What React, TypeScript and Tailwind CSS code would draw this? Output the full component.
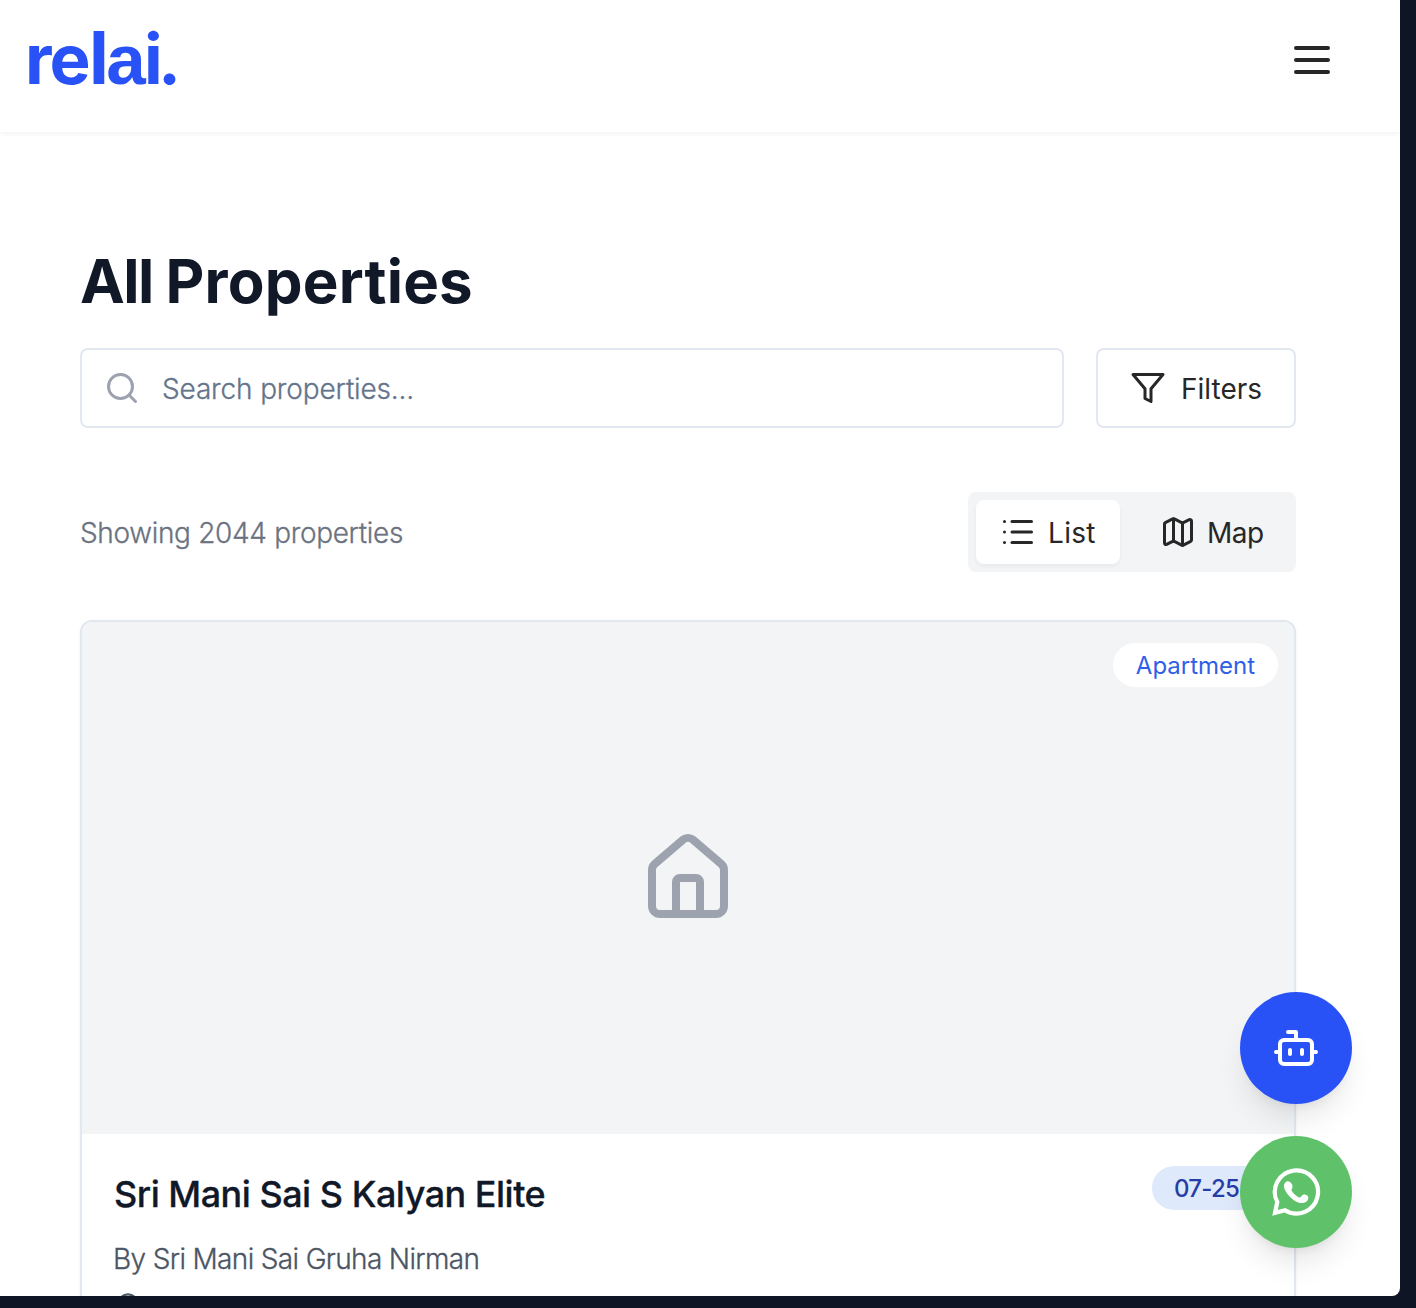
import type { ReactNode, SVGProps } from 'react';
import { Bot, House, List, Map } from 'lucide-react';

function MenuIcon(props: SVGProps<SVGSVGElement>) {
  return (
    <svg viewBox="0 0 24 24" fill="none" stroke="currentColor" strokeWidth="2" strokeLinecap="round" {...props}>
      <path d="M4 6h16M4 12h16M4 18h16" />
    </svg>
  );
}

function SearchIcon(props: SVGProps<SVGSVGElement>) {
  return (
    <svg viewBox="0 0 24 24" fill="none" stroke="currentColor" strokeWidth="2" strokeLinecap="round" {...props}>
      <circle cx="11" cy="11" r="8" />
      <path d="m21 21-4.3-4.3" />
    </svg>
  );
}

function FilterIcon(props: SVGProps<SVGSVGElement>) {
  return (
    <svg viewBox="0 0 24 24" fill="none" stroke="currentColor" strokeWidth="2" strokeLinecap="round" strokeLinejoin="round" {...props}>
      <polygon points="22 3 2 3 10 12.46 10 19 14 21 14 12.46 22 3" />
    </svg>
  );
}

function PinIcon(props: SVGProps<SVGSVGElement>) {
  return (
    <svg viewBox="0 0 24 24" fill="none" stroke="currentColor" strokeWidth="2" {...props}>
      <path d="M20 10c0 6-8 12-8 12s-8-6-8-12a8 8 0 0 1 16 0Z" />
      <circle cx="12" cy="10" r="3" />
    </svg>
  );
}

function WhatsappIcon(props: SVGProps<SVGSVGElement>) {
  return (
    <svg viewBox="0 0 24 24" overflow="visible" {...props}>
      <path
        d="M1.5 22.4 2.65 17A10.8 10.8 0 1 1 6.5 21.15Z"
        fill="none"
        stroke="currentColor"
        strokeWidth="2.1"
        strokeLinejoin="miter"
      />
      <path
        d="M7.8 6.6C6.6 6.8 5.9 7.9 6 9.2C6.2 11 7.4 12.8 8.8 14.3C10.2 15.8 11.9 17 13.5 17.4C15 17.8 16.9 17.4 17.7 16.2C18.2 15.5 18.3 14.7 18 14.2C17.5 13.5 16.6 13.2 15.8 13.3C14.9 13.5 14.7 14.5 14 14.8C12.6 14.6 10.4 12.5 9.7 11.1C9.7 10.5 10.3 10.1 10.3 9.1C10.2 8 9 6.5 7.8 6.6Z"
        fill="currentColor"
      />
    </svg>
  );
}

function FloatingButton({ className, label, children }: { className: string; label: string; children: ReactNode }) {
  return (
    <button
      aria-label={label}
      className={`flex size-28 items-center justify-center rounded-full text-white shadow-[0_20px_30px_-6px_rgba(0,0,0,0.1),0_8px_12px_-8px_rgba(0,0,0,0.1)] ${className}`}
    >
      {children}
    </button>
  );
}

function Header() {
  return (
    <header className="h-[132px] shrink-0 bg-white shadow-[0_2px_4px_rgba(0,0,0,0.05)]">
      <div className="flex w-[1376px] items-start justify-between pr-10 pl-[25px]">
        <span className="pt-[21px] text-[69px] leading-[68px] font-bold tracking-[-1.8px] text-[#2952f6]">
          re<span className="text-[73px] leading-none tracking-[-2.5px]">l</span>
          <span className="font-['Liberation_Sans'] text-[71px] leading-none tracking-[-1.8px]">a</span>
          <span className="tracking-[-4.5px]">i.</span>
        </span>
        <button aria-label="Menu" className="mt-9">
          <MenuIcon className="size-12" />
        </button>
      </div>
    </header>
  );
}

function PropertyCard() {
  return (
    <article className="mt-12 overflow-hidden rounded-t-xl border-2 border-b-0 border-[#e2e8f0] shadow-[0_2px_4px_rgba(0,0,0,0.05)]">
      <div className="relative flex h-[512px] items-center justify-center bg-[#f3f4f6]">
        <House size={96} className="text-[#9ca3af]" />
        <span className="absolute top-[21px] right-4 flex h-11 w-[165px] items-center justify-center rounded-full bg-white pt-0.5 text-2xl text-[#2f5fe6]">
          Apartment
        </span>
      </div>
      <div className="px-8 pt-8">
        <div className="flex items-start justify-between">
          <h2 className="pt-[3px] text-[36px] leading-[50px] font-medium tracking-[-0.5px] text-[#111827] [-webkit-text-stroke:0.3px]">
            Sri Mani Sai S Kalyan Elite
          </h2>
          <span className="mr-[-10px] flex h-11 w-[120px] items-center rounded-full bg-[#dee9fc] pt-0.5 pl-[22px] text-2xl font-medium tracking-[-0.7px] whitespace-nowrap text-[#273da6]">
            07-25
          </span>
        </div>
        <p className="mt-5 -ml-px text-[28px] leading-10 font-light tracking-[-0.65px] text-[#4b5563] [-webkit-text-stroke:0.3px]">
          By Sri Mani Sai Gruha Nirman
        </p>
        <PinIcon className="mt-[13px] size-7 text-[#4b5563]" />
      </div>
    </article>
  );
}

export default function App() {
  return (
    <div className="h-[1308px] w-[1416px] overflow-hidden bg-[#0e1524] font-['Inter',sans-serif] text-[#272727]">
      <div className="relative flex h-[1296px] w-[1400px] flex-col overflow-hidden rounded-br-lg bg-white">
        <Header />
        <main className="w-[1376px] px-20 pt-[113px]">
          <h1 className="text-[60px] leading-[72px] font-bold text-[#111827]">
            <span className="tracking-[-1.5px]">All </span>
            <span className="tracking-[0.2px]">Properties</span>
          </h1>

          <div className="mt-[31px] flex gap-8">
            <label className="flex h-20 flex-1 items-center gap-[22px] rounded-lg border-2 border-[#e2e8f0] pl-[22px]">
              <SearchIcon className="size-9 text-[#9ca3af]" />
              <span className="pt-0.5 text-[28px] font-light tracking-[-0.15px] text-[#64748b] [-webkit-text-stroke:0.3px]">
                Search properties...
              </span>
            </label>
            <button className="flex h-20 w-[200px] items-center gap-[15px] rounded-lg border-2 border-[#e2e8f0] pl-8">
              <FilterIcon className="size-9" />
              <span className="pt-0.5 text-[28px]">Filters</span>
            </button>
          </div>

          <div className="mt-16 flex h-20 items-center justify-between">
            <p className="pt-0.5 text-[28px] font-light tracking-[-0.33px] text-[#6b7280] [-webkit-text-stroke:0.3px]">
              Showing 2044 properties
            </p>
            <div className="flex h-20 gap-4 rounded-lg bg-[#f3f4f6] p-2">
              <button className="flex w-36 items-center gap-3 rounded-lg bg-white pl-6 shadow-[0_2px_4px_rgba(0,0,0,0.05)]">
                <List size={36} />
                <span className="pt-0.5 text-[28px] tracking-[0.3px]">List</span>
              </button>
              <button className="flex w-[152px] items-center gap-[11px] rounded-lg pl-6">
                <Map size={36} />
                <span className="pt-0.5 text-[28px] tracking-[-0.5px]">Map</span>
              </button>
            </div>
          </div>

          <PropertyCard />
        </main>

        <div className="absolute right-12 bottom-12 flex flex-col gap-8">
          <FloatingButton className="bg-[#2952f6]" label="Chat assistant">
            <Bot size={48} />
          </FloatingButton>
          <FloatingButton className="bg-[#5fc26a]" label="WhatsApp">
            <WhatsappIcon className="size-12" />
          </FloatingButton>
        </div>
      </div>
    </div>
  );
}
